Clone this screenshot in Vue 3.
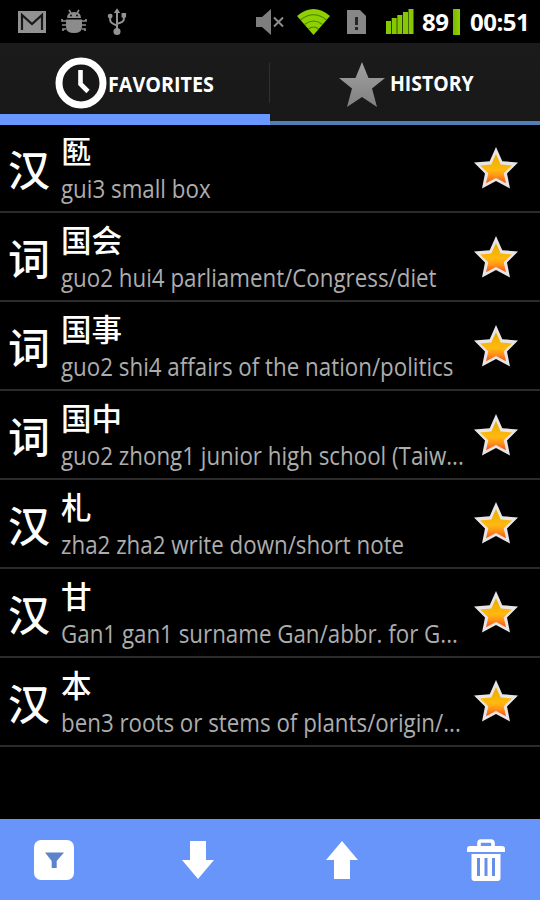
<script setup>
const entries = [
  { type: '汉', word: '匦', note: 'gui3 small box' },
  { type: '词', word: '国会', note: 'guo2 hui4 parliament/Congress/diet' },
  { type: '词', word: '国事', note: 'guo2 shi4 affairs of the nation/politics' },
  { type: '词', word: '国中', note: 'guo2 zhong1 junior high school (Taiw...' },
  { type: '汉', word: '札', note: 'zha2 zha2 write down/short note' },
  { type: '汉', word: '甘', note: 'Gan1 gan1 surname Gan/abbr. for G...' },
  { type: '汉', word: '本', note: 'ben3 roots or stems of plants/origin/...' },
]
</script>

<template>
  <div class="screen">
    <header class="status">
      <svg class="mail" width="28" height="22" viewBox="0 0 28 22">
        <rect width="28" height="22" fill="#929292" />
        <path d="M4 19V4l10 9 10-9v15" fill="none" stroke="#181818" stroke-width="2.2" />
      </svg>
      <svg class="bug" width="26" height="26" viewBox="0 0 26 26">
        <g fill="#8c8c8c">
          <path d="M6 9Q6 3 13 3t7 6z" />
          <path d="M5 10.5h16V18q0 6-8 6t-8-6z" />
        </g>
        <path d="M8 1l2 3M18 1l-2 3M5 12H1v-2M5 16H1M5 20H2v2M21 12h4v-2M21 16h4M21 20h3v2" fill="none" stroke="#8c8c8c" stroke-width="1.7" />
        <circle cx="10" cy="6.5" r=".9" /><circle cx="16" cy="6.5" r=".9" />
      </svg>
      <svg class="usb" width="20" height="28" viewBox="0 0 22 30">
        <g fill="none" stroke="#939393" stroke-width="2.2">
          <path d="M11 4v21M3.500 9v4q0 3 7.500 6M18.500 8v4q0 3-7.500 5" />
        </g>
        <g fill="#939393">
          <path d="M11 0l3.500 5h-7zM16 5h5v5h-5z" />
          <circle cx="3.500" cy="8.500" r="2.700" /><circle cx="11" cy="25.500" r="3.900" />
        </g>
      </svg>
      <span class="spacer"></span>
      <svg class="mute" width="30" height="26" viewBox="0 0 30 26">
        <path d="M0 8h6l9-8v26l-9-8H0z" fill="#7e7e7e" />
        <path d="M18 8.500l9 9M27 8.500l-9 9" stroke="#8d8d8d" stroke-width="2" />
      </svg>
      <svg class="wifi" width="33" height="26" viewBox="0 0 33 26">
        <path d="M0 7Q16.500-7 33 7L16.500 26z" fill="#8fd000" />
        <g fill="none" stroke="#4d8000" stroke-width="1.100">
          <path d="M3.500 11q13-10.500 26 0M7.500 15.500q9-7 18 0M11.500 20q5-4 10 0" />
        </g>
      </svg>
      <svg class="sim" width="19" height="24" viewBox="0 0 19 24">
        <path d="M0 0h13l6 6v18H0z" fill="#878787" />
        <path d="M9.500 7v8M9.500 17v3" stroke="#262626" stroke-width="3" />
      </svg>
      <svg class="signal" width="28" height="26" viewBox="0 0 28 26">
        <g fill="#86c900">
          <rect y="12" width="5" height="13" /><rect x="5.700" y="9" width="5" height="16" />
          <rect x="11.300" y="6" width="5" height="19" /><rect x="17" y="3" width="5" height="22" />
          <rect x="22.500" width="5" height="25" />
        </g>
      </svg>
      <span class="percent">89</span>
      <span class="battery"></span>
      <span class="clock">00:51</span>
    </header>

    <nav class="tabs">
      <div class="tab active">
        <svg class="clock-icon" width="52" height="52" viewBox="0 0 52 52">
          <circle cx="26" cy="26" r="22" fill="#171717" stroke="#fff" stroke-width="7" />
          <path d="M25.500 13v14l7.500 7.500" fill="none" stroke="#fff" stroke-width="4.600" />
        </svg>
        <span class="label favorites">FAVORITES</span>
      </div>
      <div class="tab">
        <svg class="star-icon" width="48" height="47" viewBox="0 0 48 47">
          <defs>
            <linearGradient id="grey" x2="0" y2="1">
              <stop stop-color="#a2a2a2" /><stop offset="1" stop-color="#808080" />
            </linearGradient>
          </defs>
          <path d="M24 1l6.500 16H47L34 27.500 39 46 24 36 9 46l5-18.500L1 17h16.500z" fill="url(#grey)" />
        </svg>
        <span class="label history">HISTORY</span>
      </div>
    </nav>

    <main class="list">
      <article v-for="entry in entries" :key="entry.word" class="row">
        <span class="type">{{ entry.type }}</span>
        <div class="text">
          <div class="word">{{ entry.word }}</div>
          <div class="note">{{ entry.note }}</div>
        </div>
        <svg class="fav" width="44" height="42" viewBox="0 0 44 42">
          <defs>
            <linearGradient id="gold" x2="0" y2="1">
              <stop offset=".15" stop-color="#f0b000" /><stop offset=".55" stop-color="#ffb910" />
              <stop offset=".75" stop-color="#ff9418" /><stop offset="1" stop-color="#f4531c" />
            </linearGradient>
          </defs>
          <path d="M22 0l6.300 14.200L44 15.500 33 26.500 36 41.500 22 34 8 41.500l3-15L0 15.500l15.700-1.300z" fill="#e9e5e6" />
          <path d="M22 7l4.700 10.500 11.300 1-8.300 7.700 2.300 10-10-5.200-10 5.200 2.300-10L6 18.500l11.300-1z" fill="url(#gold)" />
        </svg>
      </article>
    </main>

    <footer class="actions">
      <div class="action">
        <svg width="40" height="40" viewBox="0 0 40 40">
          <rect width="40" height="40" rx="7" fill="#fff" />
          <path d="M11 12.500h19l-7.300 8.500v7h-5v-7z" fill="#5c83cc" />
        </svg>
      </div>
      <div class="action">
        <svg width="32" height="38" viewBox="0 0 32 38"><path d="M8 0h16v19h8L16 38 0 19h8z" fill="#fff" /></svg>
      </div>
      <div class="action">
        <svg width="32" height="38" viewBox="0 0 32 38"><path d="M16 0l16 19h-8v19H8V19H0z" fill="#fff" /></svg>
      </div>
      <div class="action">
        <svg width="38" height="42" viewBox="0 0 38 42">
          <path d="M12 8V4q0-2 2-2h10q2 0 2 2v4" fill="none" stroke="#fff" stroke-width="3.600" />
          <path d="M0 13V10q0-3 3-3h32q3 0 3 3v3z" fill="#fff" />
          <path d="M4.500 15h29v24q0 3-3 3h-23q-3 0-3-3z" fill="#fff" />
          <path d="M11.500 19v18M19 19v18M26.500 19v18" stroke="#668fe7" stroke-width="3" />
        </svg>
      </div>
    </footer>
  </div>
</template>

<style>
body { background: #000; }
</style>

<style scoped>
.screen {
  width: 540px;
  height: 900px;
  display: flex;
  flex-direction: column;
  overflow: hidden;
  background: #000;
  color: #fff;
  font-family: "Open Sans", "Noto Sans CJK SC", sans-serif;
}
svg { display: block; flex: none; }
.status {
  height: 43px;
  flex: none;
  display: flex;
  align-items: center;
  padding: 0 11px 0 18px;
  box-sizing: border-box;
}
.bug { margin-left: 15px; }
.usb { margin-left: 20px; }
.spacer { flex: 1; }
.wifi { margin-left: 11px; }
.sim { margin-left: 17px; }
.signal { margin-left: 20px; }
.percent, .clock { font-size: 24px; line-height: 40px; font-weight: 700; white-space: nowrap; }
.percent { width: 27px; margin-left: 8px; letter-spacing: -.5px; }
.battery { width: 7px; height: 26px; margin-left: 4px; background: linear-gradient(90deg, #76b900, #92d400); }
.clock { width: 59px; margin-left: 10px; letter-spacing: -.5px; }
.tabs {
  height: 81.500px;
  flex: none;
  display: grid;
  grid-template-columns: 1fr 1fr;
  background: linear-gradient(#1b1b1b, #181818);
}
.tab {
  display: flex;
  align-items: center;
  padding-left: 68px;
  border-bottom: 4px solid #517fb9;
}
.tab.active {
  padding-left: 55px;
  border-bottom: 11px solid #6797ff;
  background: linear-gradient(#303030, #303030) right 20px / 1px 40px no-repeat;
}
.clock-icon { margin-top: 10px; }
.star-icon { margin-top: 5px; }
.label {
  font-weight: 700;
  font-size: 21px;
  line-height: 28px;
  white-space: nowrap;
  transform: scaleX(.94);
  transform-origin: 0 50%;
}
.favorites { margin: 11px 0 0 1px; }
.history { margin: 3px 0 0 4px; transform: scaleX(.925); }
.list { flex: 1; }
.row {
  height: 88.88px;
  display: flex;
  align-items: center;
  box-sizing: border-box;
  border-bottom: 2px solid #2b2b2b;
  padding: 0 22px 0 8px;
}
.type { width: 53px; padding-top: 5px; font-size: 42px; line-height: 60px; font-weight: 500; }
.text { flex: 1; min-width: 0; padding-top: 5px; }
.word { font-size: 30.500px; line-height: 37px; font-weight: 500; }
.note {
  font-size: 25px;
  line-height: 37px;
  color: #adadad;
  white-space: nowrap;
  transform: scaleX(.893);
  transform-origin: 0 50%;
}
.actions {
  height: 81px;
  flex: none;
  display: grid;
  grid-template-columns: 108px 180px 108px 144px;
  background: #6895fa;
}
.action { display: flex; align-items: center; justify-content: center; }
.action:last-child { padding-left: 36px; }
</style>
